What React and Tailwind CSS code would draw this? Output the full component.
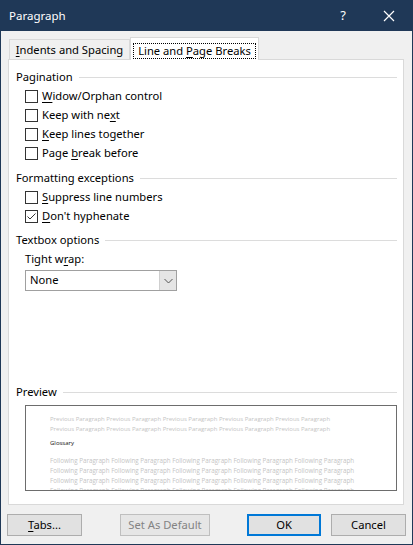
import React from "react";

// mnemonic letter
const U = ({ children }) => <span className="underline underline-offset-[2px]">{children}</span>;

const SectionTitle = ({ children, className = "" }) => (
  <div className={`flex h-[19px] items-center pr-[6px] ${className}`}>
    <span className="whitespace-nowrap">{children}</span>
    <div className="ml-[6px] h-px flex-1 bg-[#dcdcdc]" />
  </div>
);

const Check = ({ checked, children }) => (
  <div className="ml-[9px] flex h-[19px] items-center">
    <div className="flex h-[13px] w-[13px] items-center justify-center border border-[#333333] bg-white">
      {checked && (
        <svg width="11" height="11" viewBox="0 0 11 11">
          <path d="M1.5 5.5 L4 8 L9.5 2.5" fill="none" stroke="#333333" strokeWidth="1" />
        </svg>
      )}
    </div>
    <span className="ml-[4px] whitespace-nowrap">{children}</span>
  </div>
);

const Btn = ({ children, disabled, primary, className = "" }) => (
  <div
    className={`flex h-[22px] items-center justify-center ${
      primary
        ? "border-2 border-[#0078d7] bg-[#e1e1e1]"
        : disabled
        ? "border border-[#bfbfbf] bg-[#e6e6e6] text-[#838383]"
        : "border border-[#adadad] bg-[#e1e1e1]"
    } ${className}`}
  >
    <span>{children}</span>
  </div>
);

const PREV = "Previous Paragraph Previous Paragraph Previous Paragraph Previous Paragraph Previous Paragraph";
const FOLL = "Following Paragraph Following Paragraph Following Paragraph Following Paragraph Following Paragraph";

export default function App() {
  return (
    <div className="flex h-[545px] w-[413px] flex-col border-x border-b border-[#1f3857] bg-[#f0f0f0] font-['Noto_Sans',sans-serif] text-[11.2px] text-black">
      {/* title bar */}
      <div className="flex h-[31px] items-center bg-[#1f3857] pl-[8px] text-white">
        <span className="text-[11.5px]">Paragraph</span>
        <span className="ml-auto mr-[37px] text-[13px]">?</span>
        <svg width="12" height="12" viewBox="0 0 12 12" className="mr-[17px]">
          <path d="M1 1 L11 11 M11 1 L1 11" stroke="white" strokeWidth="1.2" />
        </svg>
      </div>

      {/* tabs */}
      <div className="flex items-end pl-[8px] pt-[6px]">
        <div className="-mb-px flex h-[21px] w-[121px] items-center justify-center border border-b-0 border-[#d9d9d9] bg-[#f0f0f0] pt-[1px]">
          <span className="whitespace-nowrap"><U>I</U>ndents and Spacing</span>
        </div>
        <div className="relative z-10 -mb-px flex h-[23px] w-[129px] items-start justify-center border border-b-0 border-[#d9d9d9] bg-white pt-[5px]">
          <span className="flex h-[16px] items-center whitespace-nowrap border border-dotted border-black px-[4px]">
            <span>Line and <U>P</U>age Breaks</span>
          </span>
        </div>
      </div>

      {/* panel */}
      <div className="ml-[7px] mr-[8px] flex h-[446px] flex-col border border-[#d9d9d9] bg-white pl-[7px] pt-[8px]">
        <SectionTitle>Pagination</SectionTitle>
        <Check><U>W</U>idow/Orphan control</Check>
        <Check>Keep with ne<U>x</U>t</Check>
        <Check><U>K</U>eep lines together</Check>
        <Check>Page <U>b</U>reak before</Check>

        <SectionTitle className="mt-[6px]">Formatting exceptions</SectionTitle>
        <Check><U>S</U>uppress line numbers</Check>
        <Check checked><U>D</U>on't hyphenate</Check>

        <SectionTitle className="mt-[5px]">Textbox options</SectionTitle>
        <div className="ml-[9px] flex h-[19px] items-center">
          <span>Tight w<U>r</U>ap:</span>
        </div>
        <div className="ml-[9px] mt-[1px] flex h-[21px] w-[152px] border border-[#a0a0a0] bg-white">
          <span className="flex flex-1 items-center pl-[4px]">None</span>
          <div className="flex w-[17px] items-center justify-center border-l border-[#cfcfcf] bg-[#e5e5e5]">
            <svg width="9" height="6" viewBox="0 0 9 6">
              <path d="M0.5 1 L4.5 5 L8.5 1" fill="none" stroke="#555555" strokeWidth="1" />
            </svg>
          </div>
        </div>

        <SectionTitle className="mt-[92px]">Preview</SectionTitle>
        <div className="ml-[9px] mr-[6px] mt-[3px] h-[86px] overflow-hidden border border-[#6d6d6d] bg-white pl-[24px] pt-[8px] font-['Open_Sans',sans-serif] leading-[10px]">
          <div className="whitespace-nowrap text-[6px] text-[#c4c4c4]">{PREV}</div>
          <div className="whitespace-nowrap text-[6px] text-[#c4c4c4]">{PREV}</div>
          <div className="mt-[4px] whitespace-nowrap text-[6px] text-[#111111]">Glossary</div>
          <div className="mt-[8px] whitespace-nowrap text-[6.25px] text-[#c4c4c4]">{FOLL}</div>
          <div className="whitespace-nowrap text-[6.25px] text-[#c4c4c4]">{FOLL}</div>
          <div className="whitespace-nowrap text-[6.25px] text-[#c4c4c4]">{FOLL}</div>
          <div className="whitespace-nowrap text-[6.25px] text-[#c4c4c4]">{FOLL}</div>
        </div>
      </div>

      {/* buttons */}
      <div className="mt-[9px] flex pl-[6px]">
        <Btn className="w-[75px]"><U>T</U>abs...</Btn>
        <Btn disabled className="ml-[38px] w-[90px]">Set As Default</Btn>
        <Btn primary className="ml-[37px] w-[74px]">OK</Btn>
        <Btn className="ml-[10px] w-[75px]">Cancel</Btn>
      </div>
    </div>
  );
}
